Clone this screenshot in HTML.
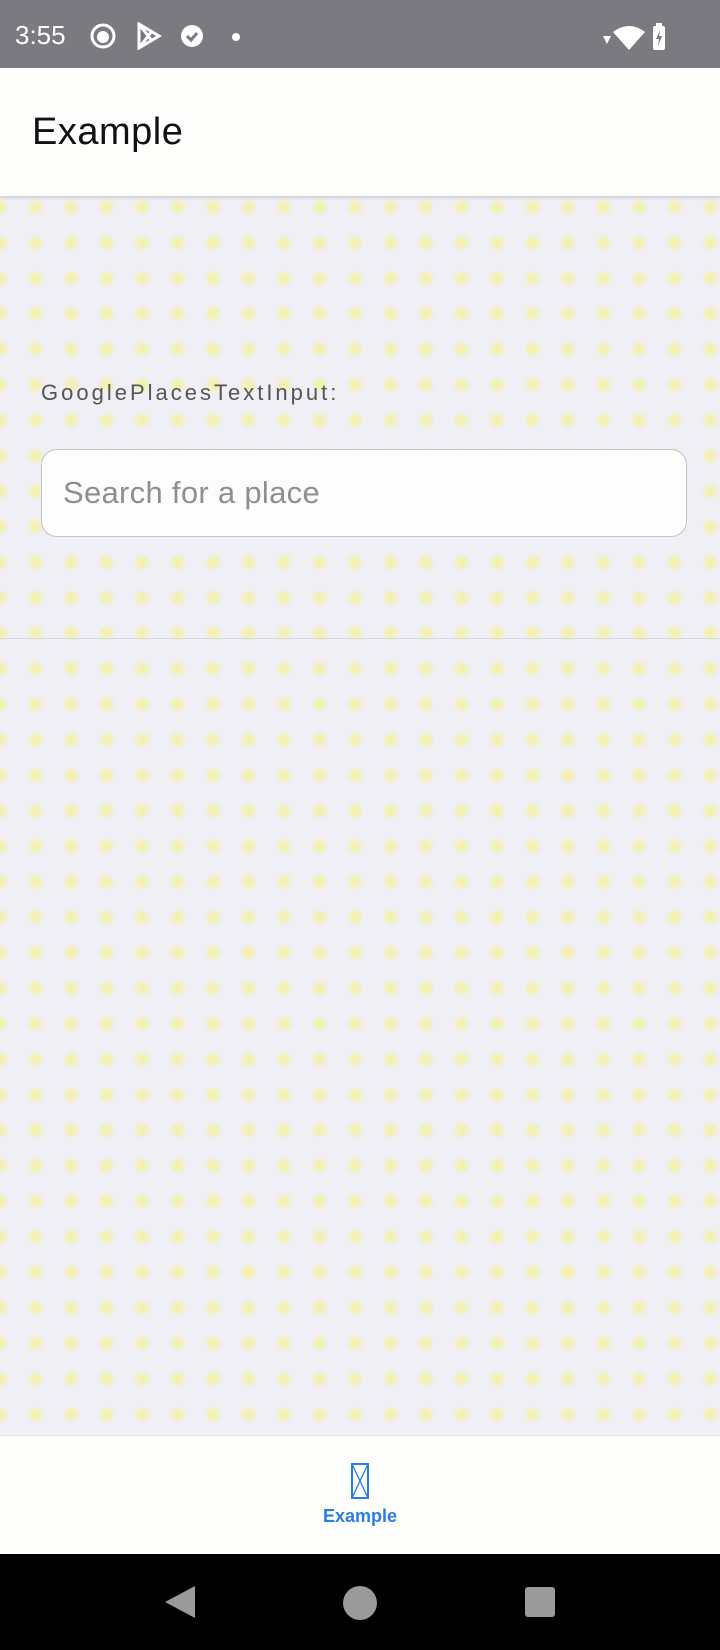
<!DOCTYPE html>
<html><head><style>
body{margin:0;width:720px;height:1650px;position:relative;overflow:hidden;font-family:"Liberation Sans",sans-serif;
background-color:#efeff5;
background-image:radial-gradient(circle,rgba(245,240,140,.8) 0,rgba(245,240,140,.4) 6px,rgba(245,240,140,0) 9px);
background-size:35.5px 35.5px;background-position:18px 12px;}
.sb{position:absolute;left:0;top:0;width:720px;height:68px;background:#7a7a80;color:#fff}
.hd{position:absolute;left:0;top:68px;width:720px;height:128px;background:#fefefc;box-shadow:0 2px 3px rgba(0,0,0,.15)}
.hd span{position:absolute;left:32px;top:43px;font-size:38px;color:#111;letter-spacing:.5px}
.lbl{position:absolute;left:41px;top:380px;font-size:22px;letter-spacing:3px;color:#555}
.inp{position:absolute;left:41px;top:449px;width:646px;height:88px;border:1.5px solid #c4c4cc;border-radius:16px;background:#fdfdfd;box-sizing:border-box}
.inp span{position:absolute;left:21px;top:25px;font-size:31px;color:#8e8e95;letter-spacing:.3px}
.sep{position:absolute;left:0;top:638px;width:720px;height:1px;background:#d6d6e0}
.nav{position:absolute;left:0;top:1435px;width:720px;height:119px;background:#fefefc;border-top:1px solid #e4e4ea}
.nav span{position:absolute;left:0;width:720px;text-align:center;top:70px;font-size:18px;font-weight:bold;color:#2a7ee0}
.sys{position:absolute;left:0;top:1554px;width:720px;height:96px;background:#000}
</style></head><body>
<div class="sb">
<span style="position:absolute;left:15px;top:20px;font-size:26px">3:55</span>
<svg style="position:absolute;left:90px;top:22px" width="26" height="28"><circle cx="13" cy="14" r="11" fill="none" stroke="#fff" stroke-width="3"/><circle cx="13" cy="15" r="6" fill="#fff"/></svg>
<svg style="position:absolute;left:136px;top:22px" width="26" height="28"><path d="M3 2 L23 14 L3 26 Z M3 2 L16 19 M3 26 L16 9" fill="none" stroke="#fff" stroke-width="3"/></svg>
<svg style="position:absolute;left:180px;top:24px" width="24" height="24"><circle cx="12" cy="12" r="11" fill="#fff"/><path d="M7 12 l4 4 l6 -7" stroke="#7a7a80" stroke-width="3" fill="none"/></svg>
<svg style="position:absolute;left:232px;top:33px" width="8" height="8"><circle cx="4" cy="4" r="4" fill="#fff"/></svg>
<svg style="position:absolute;left:603px;top:24px" width="60" height="26"><path d="M0 12 L8 12 L4 20 Z" fill="#fff"/><path d="M10 8 Q26 -4 42 8 L26 26 Z" fill="#fff"/></svg>
<svg style="position:absolute;left:651px;top:22px" width="16" height="28"><rect x="2" y="4" width="12" height="24" rx="2" fill="#fff"/><rect x="5" y="1" width="6" height="4" fill="#fff"/><path d="M9 8 L5 17 L8 17 L7 24 L11 14 L8 14 Z" fill="#7a7a80"/></svg>
</div>
<div class="hd"><span>Example</span></div>
<div class="lbl">GooglePlacesTextInput:</div>
<div class="inp"><span>Search for a place</span></div>
<div class="sep"></div>
<div class="nav">
<svg style="position:absolute;left:351px;top:27px" width="18" height="36"><rect x="1" y="1" width="16" height="34" fill="none" stroke="#2a7ee0" stroke-width="2"/><path d="M1 1 L17 35 M17 1 L1 35" stroke="#2a7ee0" stroke-width="1.3"/></svg>
<span>Example</span></div>
<div class="sys">
<svg style="position:absolute;left:163px;top:30px" width="34" height="36"><path d="M32 2 L32 34 L2 18 Z" fill="#9a9a9a"/></svg>
<svg style="position:absolute;left:342px;top:31px" width="36" height="36"><circle cx="18" cy="18" r="17" fill="#9a9a9a"/></svg>
<div style="position:absolute;left:525px;top:33px;width:30px;height:30px;background:#9a9a9a;border-radius:3px"></div>
</div>
</body></html>
